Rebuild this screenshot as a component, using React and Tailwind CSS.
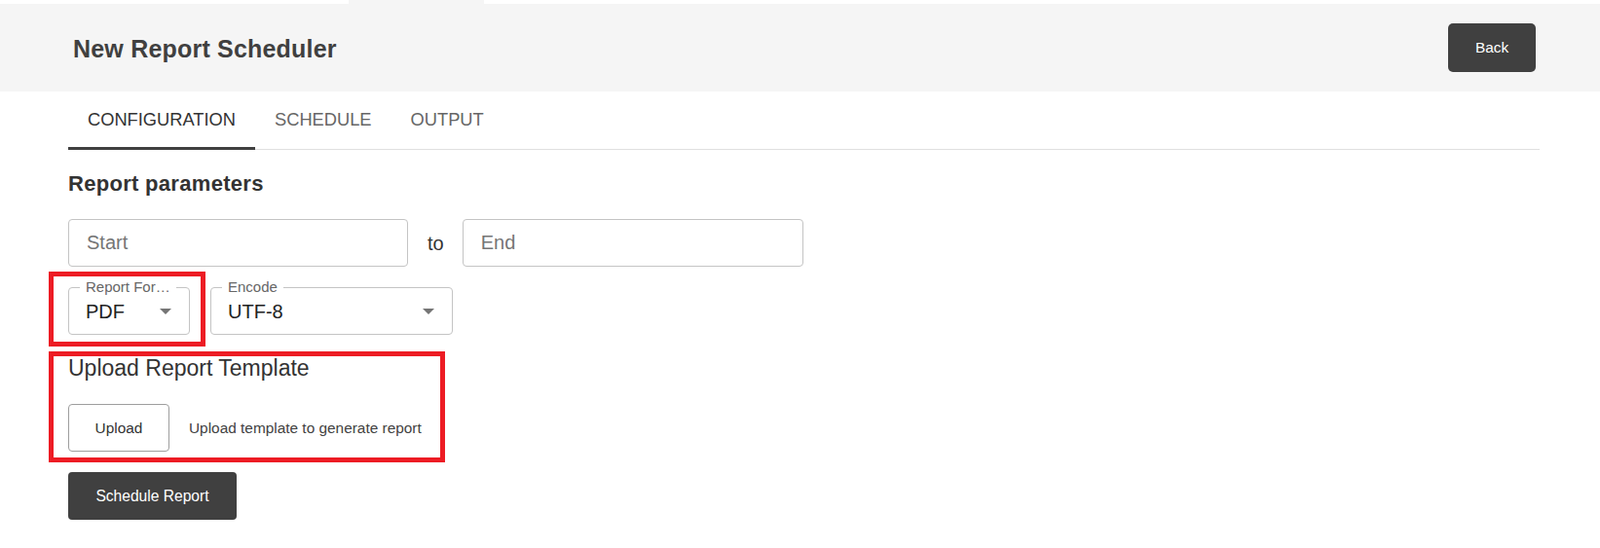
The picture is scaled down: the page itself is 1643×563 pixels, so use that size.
import { useState } from 'react';

const tabs = ['Configuration', 'Schedule', 'Output'];

function ArrowDrop() {
  return (
    <svg width="12" height="6" viewBox="0 0 12 6" className="shrink-0">
      <polygon points="0,0 12,0 6,6" fill="#757575" />
    </svg>
  );
}

function OutlinedSelect({ label, value, width }) {
  return (
    <div
      className={`relative flex h-[49px] items-center justify-between rounded-[4px] border border-[#c4c4c4] pl-[17px] pr-[18px] ${width}`}
    >
      <span className="absolute left-[11px] top-[-10px] bg-white px-[6px] text-[15px] leading-[18px] text-[#666]">
        {label}
      </span>
      <span className="text-[20px] leading-none text-[#222]">{value}</span>
      <ArrowDrop />
    </div>
  );
}

function App() {
  const [tab, setTab] = useState(0);

  return (
    <div className="relative min-h-[563px] bg-white font-['Liberation_Sans',Arial,sans-serif] text-[#404040]">
      <div className="flex h-[4px]">
        <div className="w-[358px]" />
        <div className="w-[139px] bg-[#f5f5f5]" />
      </div>

      <header className="flex h-[90px] items-center justify-between bg-[#f5f5f5] pl-[75px] pr-[66px]">
        <h1 className="pt-[2px] text-[25px] font-bold leading-none tracking-[0.2px] text-[#404040]">New Report Scheduler</h1>
        <button type="button" className="h-[50px] w-[90px] rounded-[5px] bg-[#404040] text-[15.4px] text-white">
          Back
        </button>
      </header>

      <main className="pl-[70px] pr-[62px]">
        <nav className="flex h-[60px] border-b border-[#e0e0e0]">
          {tabs.map((name, idx) => (
            <button
              key={name}
              type="button"
              onClick={() => setTab(idx)}
              className={`relative flex h-full items-center px-[20px] pb-[1px] text-[18.3px] uppercase leading-none ${
                tab === idx ? 'text-[#333]' : 'text-[#666]'
              }`}
            >
              {name}
              {tab === idx && <span className="absolute bottom-[-1px] left-0 right-0 h-[3px] bg-[#404040]" />}
            </button>
          ))}
        </nav>

        <h2 className="mt-[24px] text-[22px] font-bold leading-[22px] tracking-[0.3px] text-[#333]">Report parameters</h2>

        <div className="mt-[25px] flex items-center">
          <input
            placeholder="Start"
            className="h-[49px] w-[349px] rounded-[4px] border border-[#c4c4c4] px-[18px] text-[20px] text-[#222] outline-none placeholder:text-[#757575]"
          />
          <span className="ml-[20px] mr-[19px] text-[20px] leading-none text-[#333]">to</span>
          <input
            placeholder="End"
            className="h-[49px] w-[350px] rounded-[4px] border border-[#c4c4c4] px-[18px] text-[20px] text-[#222] outline-none placeholder:text-[#757575]"
          />
        </div>

        <div className="mt-[21px] flex gap-[21px]">
          <OutlinedSelect label="Report For…" value="PDF" width="w-[125px]" />
          <OutlinedSelect label="Encode" value="UTF-8" width="w-[249px]" />
        </div>

        <h3 className="mt-[23px] text-[23px] leading-none text-[#333]">Upload Report Template</h3>

        <div className="mt-[25px] flex items-center gap-[20px]">
          <button
            type="button"
            className="h-[49px] w-[104px] rounded-[4px] border border-[#9e9e9e] bg-white text-[15.4px] text-[#333]"
          >
            Upload
          </button>
          <span className="text-[15.4px] text-[#424242]">Upload template to generate report</span>
        </div>

        <button
          type="button"
          className="mt-[21px] h-[49px] w-[173px] rounded-[4px] bg-[#404040] text-[15.6px] text-white"
        >
          Schedule Report
        </button>
      </main>

      <div className="pointer-events-none absolute left-[50px] top-[279px] h-[77px] w-[161px] border-[5px] border-[#ed1c24]" />
      <div className="pointer-events-none absolute left-[50px] top-[361px] h-[114px] w-[407px] border-[5px] border-[#ed1c24]" />
    </div>
  );
}

export default App;
